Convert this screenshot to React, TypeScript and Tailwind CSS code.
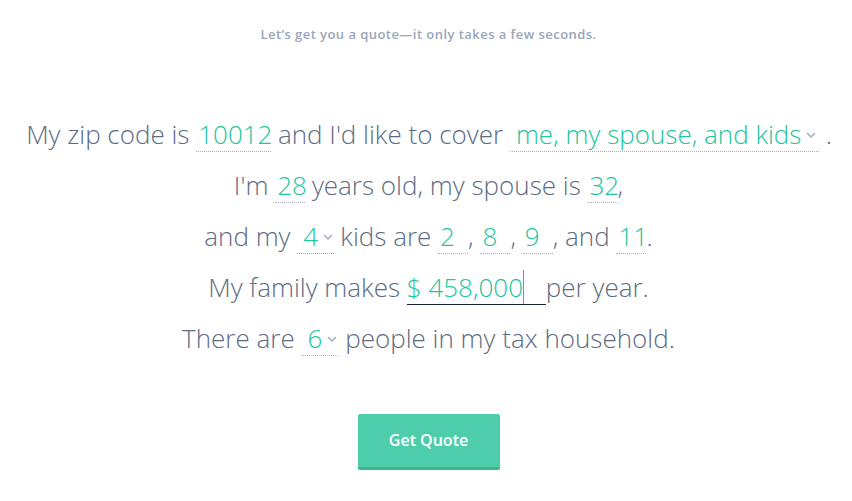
import React from "react";

const Chevron = () => (
  <svg width="10" height="7" viewBox="0 0 10 7" className="inline-block ml-[5px] mb-[2px]">
    <path d="M1.5 1.5 L5 5 L8.5 1.5" fill="none" stroke="#a3adbd" strokeWidth="1.6" strokeLinecap="round" strokeLinejoin="round" />
  </svg>
);

const Field = ({ children, w }: { children: React.ReactNode; w: string }) => (
  <span className={`inline-block ${w} text-left text-[#22c59c] border-b border-dotted border-[#aab2bf] leading-[34px] pl-[2px]`}>
    {children}
  </span>
);

export default function App() {
  return (
    <div className="w-[852px] h-[501px] bg-white flex flex-col items-center pl-[5px]" style={{ fontFamily: '"Open Sans", sans-serif' }}>
      <div className="mt-[25px] text-[13px] font-semibold text-[#9aa6ba] tracking-[0.45px]">
        Let’s get you a quote—it only takes a few seconds.
      </div>
      <div className="mt-[72px] flex flex-col items-center text-[26px] font-light text-[#5d6c83] leading-[34px] gap-[16px] whitespace-pre">
        <div className="pl-[1px]">
          My zip code is <Field w="w-[75px]">10012</Field> and I'd like to cover{" "}
          <span className="inline-block w-[309px] pl-[6px] text-left text-[#22c59c] border-b border-dotted border-[#aab2bf] leading-[34px]">
            me, my spouse, and kids
            <Chevron />
          </span>{" "}
          .
        </div>
        <div>
          I'm <Field w="w-[30px]">28</Field> years old, my spouse is <Field w="w-[30px]">32</Field>,
        </div>
        <div>
          and my{" "}
          <span className="inline-block w-[37px] pl-[6px] text-left text-[#22c59c] border-b border-dotted border-[#8fa6c2] leading-[34px]">
            4<Chevron />
          </span>
          <span className="ml-[6px]">kids are </span>
          <Field w="w-[30px]">2</Field>, <Field w="w-[30px]">8</Field>, <Field w="w-[30px]">9</Field>, and{" "}
          <Field w="w-[30px]">11</Field>.
        </div>
        <div>
          My family makes{" "}
          <span className="inline-flex w-[139px] text-[#22c59c] border-b border-[#16223e] leading-[34px]">
            <span>$ 458,000</span>
            <span className="inline-block w-px bg-[#22c59c] h-[34px]"></span>
          </span>
          <span>per year.</span>
        </div>
        <div>
          There are{" "}
          <span className="inline-block w-[37px] pl-[6px] text-left text-[#22c59c] border-b border-dotted border-[#aab2bf] leading-[34px]">
            6<Chevron />
          </span>{" "}
          people in my tax household.
        </div>
      </div>
      <button className="mt-[58px] w-[142px] h-[56px] bg-[#4ecdab] border-b-[3px] border-[#3db593] rounded-[2px] text-white text-[16px] font-semibold">
        Get Quote
      </button>
    </div>
  );
}
